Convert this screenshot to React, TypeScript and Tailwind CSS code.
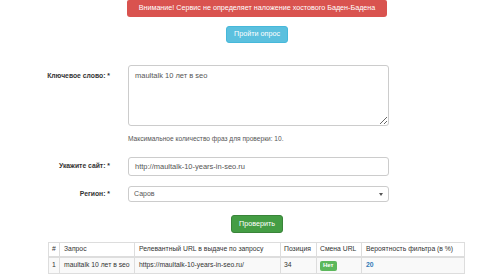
import React from "react";

export default function App() {
  const font = { fontFamily: '"Liberation Sans", Arial, sans-serif' };
  return (
    <div className="w-[500px] h-[274px] overflow-hidden bg-white text-[#333]" style={font}>
      <div className="flex flex-col items-center pl-[14px]">
        <div className="mt-0 w-[260px] h-[17px] rounded-b-[3px] rounded-t-[2px] bg-[#d9534f] text-white text-[7.2px] flex items-center justify-center">
          Внимание! Сервис не определяет наложение хостового Баден-Бадена
        </div>
        <div className="mt-[9px] w-[62px] h-[17px] rounded-[3px] bg-[#5bc0de] border border-[#46b8da] text-white text-[7.2px] flex items-center justify-center">
          Пройти опрос
        </div>
      </div>

      <div className="mt-[22px] flex">
        <div className="w-[110px] text-right text-[6.8px] font-bold pt-[6px]">Ключевое слово: *</div>
        <div className="ml-[18px]">
          <textarea
            defaultValue="maultalk 10 лет в seo"
            className="block w-[261px] h-[61px] border border-[#ccc] rounded-[3px] px-[6px] py-[4px] text-[7.5px] text-[#555] resize-y outline-none"
            style={font}
          />
          <div className="mt-[8px] text-[6.6px] text-[#555] leading-[10px]">
            Максимальное количество фраз для проверки: 10.
          </div>
        </div>
      </div>

      <div className="mt-[13px] flex items-center">
        <div className="w-[110px] text-right text-[6.8px] font-bold">Укажите сайт: *</div>
        <div className="ml-[18px] w-[261px] h-[19px] border border-[#ccc] rounded-[3px] px-[6px] flex items-center text-[7.5px] text-[#555]">
          http://maultalk-10-years-in-seo.ru
        </div>
      </div>

      <div className="mt-[10px] flex items-center">
        <div className="w-[110px] text-right text-[6.8px] font-bold">Регион: *</div>
        <div className="ml-[18px] w-[261px] h-[16px] border border-[#ccc] rounded-[3px] pl-[5px] pr-[5px] flex items-center justify-between text-[7px] text-[#555]">
          <span>Саров</span>
          <span className="w-0 h-0 border-l-[2.5px] border-r-[2.5px] border-t-[3px] border-l-transparent border-r-transparent border-t-[#555]" />
        </div>
      </div>

      <div className="mt-[13px] flex justify-center pl-[14px]">
        <div className="w-[52px] h-[18px] rounded-[3px] bg-[#449d44] border border-[#398439] text-white text-[7.2px] flex items-center justify-center">
          Проверить
        </div>
      </div>

      <div className="mt-[9px] ml-[48px] w-[417px] text-[6.8px]">
        <div className="flex h-[16px] border-t border-[#ddd] border-b-2 border-b-[#ddd]">
          <div className="w-[11px] border-l border-[#ddd] flex items-center pl-[3px]">#</div>
          <div className="w-[75px] border-l border-[#ddd] flex items-center pl-[4px]">Запрос</div>
          <div className="w-[146px] border-l border-[#ddd] flex items-center pl-[4px]">Релевантный URL в выдаче по запросу</div>
          <div className="w-[36px] border-l border-[#ddd] flex items-center pl-[3px]">Позиция</div>
          <div className="w-[45px] border-l border-[#ddd] flex items-center pl-[3px]">Смена URL</div>
          <div className="w-[104px] border-l border-r border-[#ddd] flex items-center pl-[4px]">Вероятность фильтра (в %)</div>
        </div>
        <div className="flex h-[16px] bg-[#f9f9f9] border-b border-[#ddd]">
          <div className="w-[11px] border-l border-[#ddd] flex items-center pl-[3px]">1</div>
          <div className="w-[75px] border-l border-[#ddd] flex items-center pl-[4px]">maultalk 10 лет в seo</div>
          <div className="w-[146px] border-l border-[#ddd] flex items-center pl-[4px]">https://maultalk-10-years-in-seo.ru/</div>
          <div className="w-[36px] border-l border-[#ddd] flex items-center pl-[3px]">34</div>
          <div className="w-[45px] border-l border-[#ddd] flex items-center pl-[3px]">
            <span className="bg-[#5cb85c] text-white font-bold text-[6px] px-[3px] h-[10px] flex items-center rounded-[2px]">Нет</span>
          </div>
          <div className="w-[104px] border-l border-r border-[#ddd] flex items-center pl-[4px] text-[#337ab7] font-bold">20</div>
        </div>
      </div>
    </div>
  );
}
